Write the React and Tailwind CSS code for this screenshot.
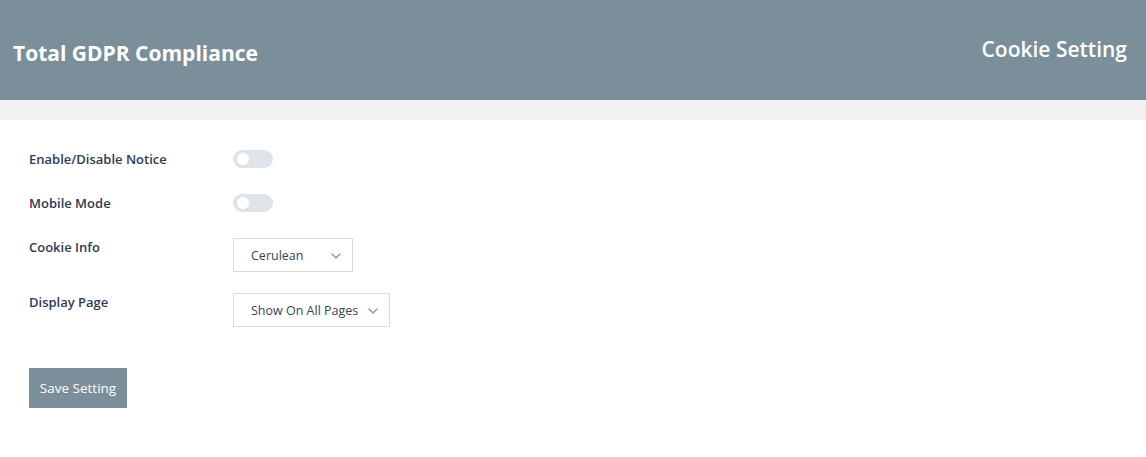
import React from "react";

const font = { fontFamily: '"Open Sans", "Noto Sans", "Liberation Sans", sans-serif' };

function Toggle() {
  return (
    <div className="relative h-[18px] w-[40px] rounded-full bg-[#dfe4e8]">
      <div className="absolute left-[4px] top-[3px] h-[12px] w-[12px] rounded-full bg-white" />
    </div>
  );
}

function Chevron() {
  return (
    <svg width="10" height="6" viewBox="0 0 10 6" fill="none">
      <path d="M1 1l4 4 4-4" stroke="#8a959e" strokeWidth="1.4" strokeLinecap="round" strokeLinejoin="round" />
    </svg>
  );
}

function Select({ value, width }) {
  return (
    <div className={`flex h-[34px] ${width} items-center justify-between border border-[#dcdcdc] pl-[17px] pr-[11px] pt-[2px] text-[12.5px] text-[#3a4356]`}>
      <span>{value}</span>
      <Chevron />
    </div>
  );
}

function Label({ children }) {
  return <div className="w-[204px] text-[13px] leading-[18px] font-semibold text-[#2f3b52]">{children}</div>;
}

export default function App() {
  return (
    <div className="min-h-[457px] w-full bg-white" style={font}>
      <div className="flex h-[100px] items-center justify-between bg-[#7a8f9a] pl-[13px] pr-[19px] text-white">
        <div className="mt-[8px] text-[21px] font-bold">Total GDPR Compliance</div>
        <div className="text-[21px] font-semibold">Cookie Setting</div>
      </div>
      <div className="h-[20px] bg-[#f1f1f1]" />
      <div className="pl-[29px] pt-[30px]">
        <div className="flex h-[44px] items-start">
          <Label>Enable/Disable Notice</Label>
          <Toggle />
        </div>
        <div className="flex h-[44px] items-start">
          <Label>Mobile Mode</Label>
          <Toggle />
        </div>
        <div className="flex h-[55px] items-start">
          <Label>Cookie Info</Label>
          <Select value="Cerulean" width="w-[120px]" />
        </div>
        <div className="flex h-[34px] items-start">
          <Label>Display Page</Label>
          <Select value="Show On All Pages" width="w-[157px]" />
        </div>
        <button className="mt-[41px] h-[40px] w-[98px] bg-[#7a8f9a] text-[13.5px] text-white">Save Setting</button>
      </div>
    </div>
  );
}
